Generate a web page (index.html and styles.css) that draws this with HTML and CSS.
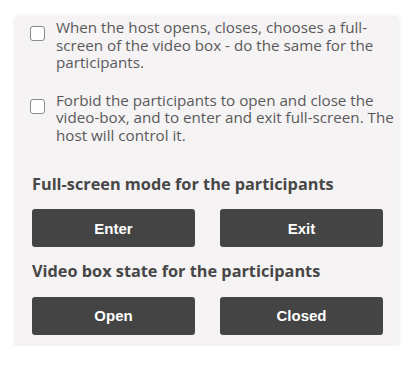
FILE: index.html
```html
<!DOCTYPE html>
<html lang="en">
<head>
<meta charset="utf-8">
<title>Video box settings</title>
<link rel="stylesheet" href="styles.css">
</head>
<body>
<div class="panel">
  <div class="options">
    <label class="option">
      <span class="checkbox"></span>
      <span class="option-text">When the host opens, closes, chooses a full-screen of the video box - do the same for the participants.</span>
    </label>
    <label class="option">
      <span class="checkbox"></span>
      <span class="option-text">Forbid the participants to open and close the video-box, and to enter and exit full-screen. The host will control it.</span>
    </label>
  </div>
  <h2 class="heading heading-first">Full-screen mode for the participants</h2>
  <div class="buttons">
    <button class="btn">Enter</button>
    <button class="btn">Exit</button>
  </div>
  <h2 class="heading heading-next">Video box state for the participants</h2>
  <div class="buttons">
    <button class="btn">Open</button>
    <button class="btn">Closed</button>
  </div>
</div>
</body>
</html>
```
FILE: styles.css
```css
html, body {
  margin: 0;
  padding: 0;
  background: #ffffff;
}

body {
  font-family: "Open Sans", "Liberation Sans", sans-serif;
}

.panel {
  box-sizing: border-box;
  margin: 16px 0 0 16px;
  width: 382px;
  padding: 3px 15px 11px 16px;
  background: #f5f3f4;
  box-shadow: 0 1px 5px rgba(0, 0, 0, 0.13);
}

.options {
  display: flex;
  flex-direction: column;
  gap: 20px;
  margin-left: -2px;
  margin-right: -14px;
}

.option {
  display: flex;
  align-items: flex-start;
  gap: 11px;
  font-size: 15.2px;
  line-height: 17.5px;
  color: #5a5a5a;
}

.checkbox {
  flex: none;
  box-sizing: border-box;
  width: 15px;
  height: 15px;
  margin-top: 7px;
  border: 1px solid #8a8a8a;
  border-radius: 3px;
  background: #ffffff;
}

.option-text {
  flex: 1;
}

.heading {
  margin: 30px 0 15px;
  font-size: 16.3px;
  line-height: 20px;
  font-weight: 700;
  color: #474747;
}

.heading-next {
  margin: 14px 0 15.5px;
}

.buttons {
  display: grid;
  grid-template-columns: 1fr 1fr;
  gap: 25px;
}

.btn {
  display: flex;
  align-items: center;
  justify-content: center;
  height: 38px;
  padding: 0;
  border: none;
  border-radius: 3px;
  background: #444444;
  color: #ffffff;
  font-family: "Liberation Sans", Arial, sans-serif;
  font-size: 15px;
  font-weight: 700;
}
```
